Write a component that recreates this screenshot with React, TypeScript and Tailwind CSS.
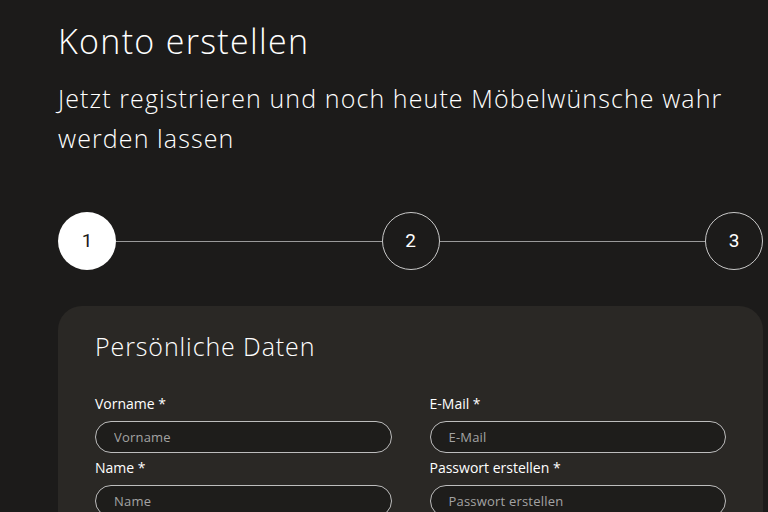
import React from "react";

const font = { fontFamily: '"Open Sans", "Noto Sans", sans-serif' };

const Step: React.FC<{ n: number; active?: boolean }> = ({ n, active }) => (
  <div
    className={
      active
        ? "w-[58px] h-[58px] shrink-0 rounded-full bg-white text-[#1c1b1a] flex items-center justify-center text-[19px] font-[Roboto]"
        : "w-[58px] h-[58px] shrink-0 rounded-full border border-[#c9c9c9] text-white flex items-center justify-center text-[19px] font-[Roboto]"
    }
  >
    {n}
  </div>
);

const Field: React.FC<{ label: string; placeholder: string; type?: string }> = ({
  label,
  placeholder,
  type = "text",
}) => (
  <div className="flex flex-col">
    <label className="text-[14px] leading-[20px] text-white mb-[7px]">{label}</label>
    <input
      type={type}
      placeholder={placeholder}
      className="h-[32px] w-full rounded-full border border-[#bdbdbd] bg-[#1e1d1b] px-[18px] text-[13px] tracking-[0.2px] text-white placeholder:text-[#a3a3a3] outline-none mb-[5px]"
    />
  </div>
);

export default function App() {
  return (
    <div className="min-h-screen bg-[#1c1b1a] text-white overflow-hidden" style={font}>
      <div className="ml-[58px] w-[705px] pt-[21px]">
        <h1 className="text-[34px] leading-[40px] font-light tracking-[1.3px]">Konto erstellen</h1>
        <p className="mt-[17px] text-[25px] leading-[40px] font-light tracking-[1.1px]">
          Jetzt registrieren und noch heute Möbelwünsche wahr werden lassen
        </p>

        {/* Stepper */}
        <div className="mt-[54px] flex items-center">
          <Step n={1} active />
          <div className="flex-1 h-px bg-[#9a9a9a]" />
          <Step n={2} />
          <div className="flex-1 h-px bg-[#9a9a9a]" />
          <Step n={3} />
        </div>

        {/* Card */}
        <div className="mt-[36px] rounded-[24px] bg-[#2a2825] px-[37px] pt-[24px] pb-[30px]">
          <h2 className="text-[25px] leading-[32px] font-light tracking-[0.9px]">Persönliche Daten</h2>
          <div className="mt-[32px] grid grid-cols-2 gap-x-[38px]">
            <div className="flex flex-col">
              <Field label="Vorname *" placeholder="Vorname" />
              <Field label="Name *" placeholder="Name" />
            </div>
            <div className="flex flex-col">
              <Field label="E-Mail *" placeholder="E-Mail" type="email" />
              <Field label="Passwort erstellen *" placeholder="Passwort erstellen" type="password" />
            </div>
          </div>
        </div>
      </div>
    </div>
  );
}
